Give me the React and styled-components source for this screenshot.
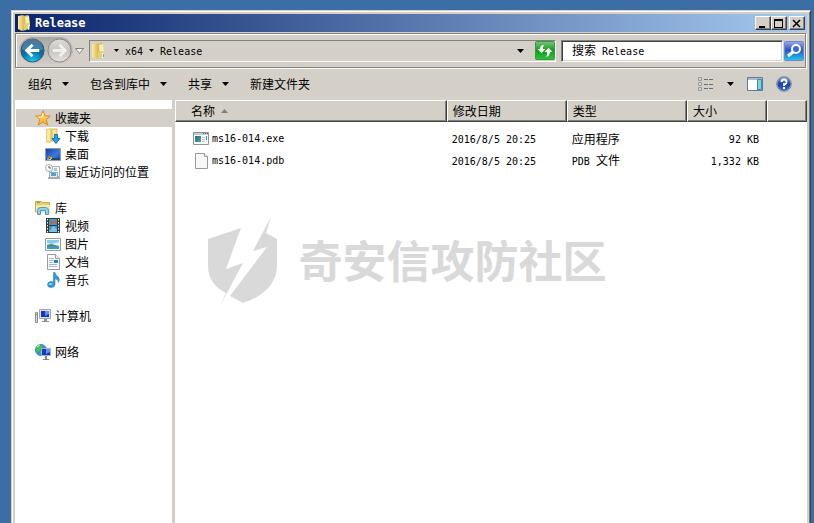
import React from 'react';
import styled, { createGlobalStyle } from 'styled-components';

const face = '#d4d0c8';
const shadow = '#808080';
const dark = '#404040';

const GlobalStyle = createGlobalStyle`
  * {
    box-sizing: border-box;
  }
  body {
    margin: 0;
    background: #3a6ea5;
    color: #000;
    font: 12px/18px "Noto Sans CJK SC", sans-serif;
  }
  #root {
    position: relative;
    min-height: 100vh;
    overflow: hidden;
  }
  button, input {
    margin: 0;
    padding: 0;
    border: 0;
    background: none;
    color: inherit;
    font: inherit;
  }
  a {
    color: inherit;
    text-decoration: none;
  }
  svg {
    display: block;
    flex: none;
  }
`;

const Window = styled.main`
  display: flex;
  flex-direction: column;
  min-height: calc(100vh - 10px);
  margin: 10px 3px 0 11px;
  padding: 3px 3px 0;
  border: 1px solid ${face};
  border-right-color: ${dark};
  border-bottom: 0;
  background: ${face};
  box-shadow: inset 1px 1px #fff, inset -1px 0 ${shadow};
`;

const TitleBar = styled.header`
  display: flex;
  align-items: center;
  height: 18px;
  padding: 0 2px;
  background: linear-gradient(90deg, #0a246a, #a6caf0);
`;

const Title = styled.h1`
  flex: 1;
  margin: 0 0 0 2px;
  color: #fff;
  font: bold 12px/18px "DejaVu Sans Mono", monospace;
`;

const CaptionButton = styled.button`
  display: flex;
  align-items: center;
  justify-content: center;
  width: 16px;
  height: 14px;
  margin-left: ${(props) => (props.$apart ? '2px' : 0)};
  border: 1px solid #fff;
  border-right-color: ${dark};
  border-bottom-color: ${dark};
  background: ${face};
  box-shadow: inset -1px -1px ${shadow};
`;

const NavBar = styled.div`
  display: flex;
  align-items: center;
  height: 35px;
  margin: 1px 1px 1px 0;
  padding: 0 1px 0 3px;
  border: 1px solid ${shadow};
  box-shadow: 1px 1px #fff, inset 1px 1px #fff;
`;

const Travel = styled.div`
  display: flex;
  align-items: center;
  gap: 2px;
  height: 27px;
  margin-right: 2px;
  padding: 0 1px;
  border-radius: 14px;
  background: linear-gradient(#aaa8a2, #d0ccc5);
`;

const IconButton = styled.button`
  display: flex;
  align-items: center;
  justify-content: center;
`;

const AddressBar = styled.div`
  display: flex;
  flex: 1;
  align-items: center;
  height: 22px;
  margin: 0 5px;
  padding-left: 1px;
  border: 1px solid ${shadow};
  border-right-color: #fff;
  border-bottom-color: #fff;
`;

const Crumbs = styled.nav`
  display: flex;
  flex: 1;
  align-items: center;
  gap: 6px;
  margin-left: 7px;
`;

const Locate = styled.div`
  display: flex;
  align-items: center;
  gap: 11px;
`;

const Search = styled.form`
  display: flex;
  align-items: center;
  gap: 1px;
`;

const SearchField = styled.div`
  display: flex;
  align-items: center;
  width: 222px;
  height: 22px;
  padding-left: 10px;
  border: 1px solid ${shadow};
  border-right-color: #fff;
  border-bottom-color: #fff;
  background: #fff;
  box-shadow: inset 1px 1px ${dark}, inset -1px -1px ${face};

  input {
    flex: 1;
    min-width: 0;
    outline: 0;
  }
`;

const Ascii = styled.span`
  font: 10px/18px "DejaVu Sans Mono", monospace;
  white-space: pre;
`;

const Toolbar = styled.div`
  display: flex;
  align-items: center;
  height: 31px;
  padding: 0 15px 2px 13px;
`;

const Command = styled.button`
  display: flex;
  align-items: center;
  gap: 10px;
  margin-right: 21px;
`;

const ToolbarEnd = styled.div`
  display: flex;
  align-items: center;
  gap: 13px;
  margin-left: auto;
`;

const Panes = styled.div`
  display: flex;
  flex: 1;
`;

const Sidebar = styled.nav`
  flex: none;
  width: 157px;
  padding: 9px 0 0 1px;
  background: #fff;
`;

const Group = styled.ul`
  margin: 0 0 18px;
  padding: 0;
  list-style: none;
`;

const Place = styled.a`
  display: flex;
  align-items: center;
  gap: 4px;
  height: 18px;
  padding-left: ${(props) => (props.$nested ? '29px' : '19px')};
  background: ${(props) => (props.$active ? face : 'none')};
`;

const Content = styled.section`
  flex: 1;
  margin-left: 3px;
  background: #fff;
`;

const Files = styled.table`
  width: 100%;
  border-collapse: separate;
  border-spacing: 0;
  table-layout: fixed;

  th, td {
    padding: 0 8px 0 5px;
    font-weight: normal;
    text-align: left;
    white-space: nowrap;
  }
  th {
    height: 22px;
    border: 1px solid #fff;
    border-right-color: ${dark};
    border-bottom-color: ${dark};
    background: ${face};
    box-shadow: inset -1px -1px ${shadow};
  }
  th:first-child {
    padding-left: 15px;
  }
  td {
    height: 22px;
  }
  td:first-child {
    padding-left: 18px;
  }
  td:nth-child(4) {
    text-align: right;
  }
  tbody::before {
    content: "";
    display: table-row;
    height: 6px;
  }
`;

const Col = styled.col`
  width: ${(props) => props.$width};
`;

const Cell = styled.span`
  display: flex;
  align-items: center;
  gap: ${(props) => props.$gap || '3px'};
`;

const Watermark = styled.div`
  position: absolute;
  inset: 0;
  display: flex;
  align-items: center;
  justify-content: center;
  gap: 20px;
  color: #d9d9d9;
  font: bold 44px/60px "Noto Sans CJK SC", sans-serif;
  pointer-events: none;

  span {
    padding-bottom: 6px;
  }
`;

const Caret = ({ size = 7, color = '#000', up }) => (
  <svg width={size} height={(size + 1) / 2} viewBox="0 0 8 4" preserveAspectRatio="none">
    <path d={up ? 'M0 4h8L4 0z' : 'M0 0h8L4 4z'} fill={color} />
  </svg>
);

const Icon = ({ size = 16, children }) => (
  <svg width={size} height={size} viewBox="0 0 16 16" aria-hidden="true">{children}</svg>
);

const Folder = () => (
  <Icon>
    <defs>
      <linearGradient id="folder">
        <stop offset="0" stopColor="#f8eeaa" />
        <stop offset="1" stopColor="#dcb94e" />
      </linearGradient>
    </defs>
    <path d="M6 1l5-1 1 1v11l-5 2z" fill="#d8b955" />
    <path d="M8 2l4-1 1 9-4 4z" fill="#f9efb5" />
    <path d="M1 1l5-1 1 1v13l-2 2-4-2z" fill="url(#folder)" />
    <path d="M7 9l4-1 2 1v4l-4 2-4 1 2-2z" fill="#e6cd73" />
    <path d="M11 10h2v4l-2 1z" fill="#f8f3d0" />
    <path d="M12 11h1v3h-1z" fill="#48a7d8" />
  </Icon>
);

const Star = () => (
  <Icon>
    <defs>
      <linearGradient id="star" x2="0" y2="1">
        <stop offset="0" stopColor="#ffe8a0" />
        <stop offset="1" stopColor="#ffab13" />
      </linearGradient>
    </defs>
    <path d="M8 .8l2 5 5.3.2-4.1 3.5 1.6 5.5L8 12l-4.8 3 1.6-5.5L.7 6 6 5.8z" fill="url(#star)" stroke="#e5871d" strokeLinejoin="round" />
    <path d="M8 3l-1 4-4 .4" fill="none" stroke="#fff6c5" />
  </Icon>
);

const Downloads = () => (
  <Icon>
    <path d="M1 1l5-1 1 1v12l-2 2-4-1z" fill="#e9cd67" />
    <path d="M7 1h5v12H7z" fill="#f4e49e" stroke="#d9bb5c" />
    <path d="M2 2l3-1v12H2z" fill="#f8eaa4" />
    <path d="M9.5 6.5h3v4H15L11 15.5l-4-5h2.5z" fill="#2ba0e6" stroke="#1671b6" />
  </Icon>
);

const Desktop = () => (
  <Icon>
    <defs>
      <linearGradient id="desk" y2="1">
        <stop offset="0" stopColor="#123f9c" />
        <stop offset=".6" stopColor="#3e7bdc" />
        <stop offset="1" stopColor="#163d8f" />
      </linearGradient>
    </defs>
    <path d="M.5 2.5h15v12H.5z" fill="url(#desk)" stroke="#8a9fb8" />
    <path d="M1 12h14v2H1z" fill="#26466f" />
    <path d="M3 10h2v2H3z" fill="#f15a2a" />
    <path d="M5 11h2v2H5z" fill="#8bd42e" />
    <path d="M2 12h2v2H2z" fill="#48b5ff" />
    <path d="M4 13h2v1H4z" fill="#ffd22e" />
  </Icon>
);

const Recent = () => (
  <Icon>
    <path d="M6.5 2.5h8v10h-8z" fill="#f4f7f9" stroke="#a8b0b6" />
    <path d="M4.5 8.5h8v6h-8z" fill="#e9eef2" stroke="#9aa3aa" />
    <path d="M9 4h3v3H9z" fill="#9acbe8" />
    <path d="M6 9h5v3H6z" fill="#4aa7d4" />
    <path d="M3 13h12v2H3z" fill="#a3abaf" />
    <circle cx="4" cy="4" r="3.5" fill="#fff" stroke="#a2a9af" />
    <path d="M4 2v2h2" fill="none" stroke="#55616b" />
  </Icon>
);

const Library = () => (
  <Icon>
    <path d="M.5 3V1.500h6l1 1h7V12H.5z" fill="#e8cc70" stroke="#c9a84a" />
    <path d="M1 5h14v8H1z" fill="#f7e8a2" />
    <path d="M2 2h3v1H2z" fill="#47bf35" />
    <path d="M2.5 14.5v-4q0-3 3-3h5q3 0 3 3v4h-3v-4h-5v4z" fill="#8bd0ef" stroke="#4b9ac2" />
  </Icon>
);

const Video = () => (
  <Icon>
    <path d="M1 0h14v15H1z" fill="#303a3d" />
    <path d="M4 1h8v6H4zM4 8h8v6H4z" fill="#3d9bd8" />
    <path d="M4 1l4 3 4-2v4l-3-1-3 2z" fill="#b5634a" />
    <path d="M4 14l2-4 3-2 3 4v2z" fill="#70c6f2" />
    <path d="M4 9l3 1-2 2z" fill="#b5634a" />
    <path d="M2.5 1v14M13.5 1v14" stroke="#eef2f2" strokeDasharray="1.5 1.5" />
  </Icon>
);

const Pictures = () => (
  <Icon>
    <path d="M.5 2.5h15v12H.5z" fill="#fff" stroke="#969ba0" />
    <path d="M2 4h12v9H2z" fill="#88caf0" />
    <path d="M2 7l5 1 7-2v4H2z" fill="#e9f4f5" />
    <path d="M2 9l4-1 8 2v1H2z" fill="#438c61" />
    <path d="M2 10h12v3H2z" fill="#3b9ac3" />
  </Icon>
);

const Documents = () => (
  <Icon>
    <path d="M2.5.5h8l4 4v11h-12z" fill="#fff" stroke="#979da5" />
    <path d="M10.5.5v4h4" fill="#e9edf1" stroke="#979da5" />
    <path d="M4 4.5h5M4 6.5h5M4 8.5h4M4 10.5h8M4 12.5h8" stroke="#a6b3cc" />
    <path d="M9 6h4v3H9z" fill="#267dc1" />
  </Icon>
);

const Music = () => (
  <Icon>
    <path
      d="M8.500.5h1.500q.5 2.500 2.500 3.800 3 2.500 1 6.200.2-3-3.500-4v6q-.5 3-4 3-3.500-.2-3.500-2.700 0-3 3.500-3.200 1.500 0 2.500.6z"
      fill="#2c9be3"
      stroke="#176cb1"
      strokeWidth=".5"
    />
    <ellipse cx="5.5" cy="12" rx="2" ry="1" fill="#91d8fb" />
  </Icon>
);

const Computer = () => (
  <Icon>
    <path d="M4.5 1.5h11v9h-11z" fill="#dee1e3" stroke="#a0a5aa" />
    <path d="M6 3h8v6H6z" fill="#1634c2" />
    <path d="M10 3h4v3l-4 2z" fill="#5f91ef" />
    <path d="M9 11h3v2h2v1H7v-1h2z" fill="#8b9196" />
    <path d="M.5 4.5h2v10h-2z" fill="#d1d4d6" stroke="#8b9195" />
    <path d="M1 6h1v1H1z" fill="#43c62e" />
  </Icon>
);

const Network = () => (
  <Icon>
    <circle cx="6" cy="6" r="5.5" fill="#2496d9" stroke="#4289b5" />
    <path d="M2 2l4-1 2 2-3 2-1 3-3-1zM5 7l3 2-2 2z" fill="#4bc33b" />
    <path d="M2 3l3-2" stroke="#d0f7d0" />
    <path d="M6.5 4.5h9v7h-9z" fill="#1538c5" stroke="#a4b6ca" />
    <path d="M11 5h4v3l-4 2z" fill="#638fe8" />
    <path d="M10 12h2v3h2v1H8v-1h2z" fill="#798694" />
  </Icon>
);

const Program = () => (
  <Icon>
    <defs>
      <linearGradient id="app" x2="1" y2="1">
        <stop offset="0" stopColor="#2764a5" />
        <stop offset="1" stopColor="#4aac6c" />
      </linearGradient>
    </defs>
    <path d="M.5 1.5h15v12H.5z" fill="#fff" stroke="#8b949b" />
    <path d="M1 2h14v2H1z" fill="#c3ccd3" />
    <path d="M10 2.5h1M12 2.5h1M14 2.5h1" stroke="#53606b" />
    <path d="M2 5h6v6H2z" fill="url(#app)" />
    <path d="M9 6.5h3M9 8.5h3M9 10.5h3" stroke="#b4c0c9" />
    <path d="M13 5h1v4h-1z" fill="#4387b9" />
  </Icon>
);

const Blank = () => (
  <Icon>
    <path d="M2.5.5h9l3 3v12h-12z" fill="#f8f8f8" stroke="#999" />
    <path d="M11.5.5v3h3" fill="#fff" stroke="#999" />
  </Icon>
);

const Arrow = ({ forward }) => (
  <svg width="25" height="25" viewBox="0 0 26 26" aria-hidden="true">
    <defs>
      <radialGradient id="back" cy="1" r=".9">
        <stop offset="0" stopColor="#1bd0f5" />
        <stop offset=".55" stopColor="#0871ad" />
        <stop offset="1" stopColor="#1d5684" />
      </radialGradient>
      <linearGradient id="forward" x2="0" y2="1">
        <stop offset="0" stopColor="#deddda" />
        <stop offset=".5" stopColor="#c7c5c0" />
        <stop offset="1" stopColor="#e4e2dd" />
      </linearGradient>
    </defs>
    <circle cx="13" cy="13" r="12" fill={forward ? 'url(#forward)' : 'url(#back)'} stroke={forward ? '#858585' : '#38566f'} />
    {!forward && <path d="M2 12a11 11 0 0 1 22 0q-11 3-22 0z" fill="#fff" opacity=".2" />}
    <path
      d={forward ? 'M6 13h13M13 7l6 6-6 6' : 'M20 13H7M13 7l-6 6 6 6'}
      fill="none"
      stroke={forward ? '#f1f0ed' : '#fff'}
      strokeWidth="3"
    />
  </svg>
);

const Refresh = () => (
  <svg width="20" height="19" viewBox="0 0 20 19" aria-hidden="true">
    <defs>
      <linearGradient id="refresh" x2="0" y2="1">
        <stop offset="0" stopColor="#77c778" />
        <stop offset=".5" stopColor="#12991d" />
        <stop offset="1" stopColor="#32c43b" />
      </linearGradient>
    </defs>
    <rect x=".5" y=".5" width="19" height="18" rx="1" fill="url(#refresh)" stroke="#39964b" />
    <path d="M9 4q-4 0-4 4H2.500l4 4 4-4H8q-.5-2 1-4zM11 16q4-1 4-5h2.500l-4-4-4 4H12q.5 3-1 5z" fill="#fff" />
  </svg>
);

const Magnifier = () => (
  <svg width="20" height="20" viewBox="0 0 20 20" aria-hidden="true">
    <defs>
      <linearGradient id="find" x2="0" y2="1">
        <stop offset="0" stopColor="#9caaf2" />
        <stop offset=".45" stopColor="#2854c8" />
        <stop offset="1" stopColor="#20c7f4" />
      </linearGradient>
    </defs>
    <rect x=".5" y=".5" width="19" height="19" rx="1" fill="url(#find)" stroke="#718ac6" />
    <path d="M9 11l-5 4" stroke="#fff" strokeWidth="3" />
    <circle cx="12" cy="8" r="4" fill="#3769d4" stroke="#fff" strokeWidth="2" />
  </svg>
);

const ViewList = () => (
  <Icon>
    <path d="M.5 1.5h3v3h-3zM.5 6.500h3v3h-3zM.5 11.5h3v3h-3z" fill="#fff" stroke="#929ba3" />
    <path d="M1.500 3h1M1.500 13h1" stroke="#39556f" />
    <path d="M1.500 8h1" stroke="#e03c1e" />
    <path d="M6 3.5h4M11 3.5h4M6 8.5h4M11 8.5h4M6 12.5h4M11 12.5h4" stroke="#5f6f80" />
  </Icon>
);

const PreviewPane = () => (
  <Icon>
    <path d="M.5 1.5h15v13H.5z" fill="#fff" stroke="#557e9f" />
    <path d="M1 2h14v2H1z" fill="#a9bdcd" />
    <path d="M10.5 3.5h4v10h-4z" fill="#79d5ec" stroke="#4287a5" />
  </Icon>
);

const Help = () => (
  <Icon>
    <defs>
      <linearGradient id="help" x2="0" y2="1">
        <stop offset="0" stopColor="#7da3e6" />
        <stop offset=".5" stopColor="#173eb0" />
        <stop offset="1" stopColor="#3e73da" />
      </linearGradient>
    </defs>
    <circle cx="8" cy="8" r="7.2" fill="url(#help)" stroke="#8794ad" strokeWidth="1.5" />
    <path d="M5.500 6q0-2.500 2.500-2.500T10.500 6 8 8v2" fill="none" stroke="#fff" strokeWidth="1.8" />
    <path d="M7 11h2v2H7z" fill="#fff" />
  </Icon>
);

const Shield = () => (
  <svg width="71" height="92" viewBox="0 0 71 92" aria-hidden="true">
    <path d="M0 23L33 12 18 53l17-6-23 43 6-13Q0 68 0 50z" fill="currentColor" />
    <path d="M63 1l-5 16 11 6v27q-1 26-34 37l-13-7 37-49-14 4z" fill="currentColor" />
  </svg>
);

const groups = [
  [
    { name: '收藏夹', icon: Star, active: true },
    { name: '下载', icon: Downloads },
    { name: '桌面', icon: Desktop },
    { name: '最近访问的位置', icon: Recent },
  ],
  [
    { name: '库', icon: Library },
    { name: '视频', icon: Video },
    { name: '图片', icon: Pictures },
    { name: '文档', icon: Documents },
    { name: '音乐', icon: Music },
  ],
  [{ name: '计算机', icon: Computer }],
  [{ name: '网络', icon: Network }],
];

const files = [
  { name: 'ms16-014.exe', icon: Program, type: '应用程序', size: '92 KB' },
  { name: 'ms16-014.pdb', icon: Blank, prefix: 'PDB ', type: '文件', size: '1,332 KB' },
];

const commands = [
  { name: '组织', menu: true },
  { name: '包含到库中', menu: true },
  { name: '共享', menu: true },
  { name: '新建文件夹' },
];

const App = () => {
  const [query, setQuery] = React.useState('');

  return (
    <>
      <GlobalStyle />
      <Window>
        <TitleBar>
          <Folder />
          <Title>Release</Title>
          <CaptionButton aria-label="最小化">
            <svg width="10" height="9"><path d="M1 7h6v2H1z" /></svg>
          </CaptionButton>
          <CaptionButton aria-label="最大化">
            <svg width="10" height="9"><path d="M0 0h9v9H0zM1 2v6h7V2z" fillRule="evenodd" /></svg>
          </CaptionButton>
          <CaptionButton aria-label="关闭" $apart>
            <svg width="10" height="9"><path d="M1 1l7 7M8 1L1 8" stroke="#000" strokeWidth="1.6" /></svg>
          </CaptionButton>
        </TitleBar>

        <NavBar>
          <Travel>
            <IconButton aria-label="后退"><Arrow /></IconButton>
            <IconButton aria-label="前进"><Arrow forward /></IconButton>
          </Travel>
          <IconButton aria-label="最近的页面">
            <svg width="9" height="6"><path d="M.5.5h8l-4 5z" fill="#fff" stroke="#808080" /></svg>
          </IconButton>
          <AddressBar>
            <Folder />
            <Crumbs aria-label="地址">
              <Caret size={5} />
              <a href="#x64"><Ascii>x64</Ascii></a>
              <Caret size={5} />
              <a href="#release"><Ascii>Release</Ascii></a>
            </Crumbs>
            <Locate>
              <IconButton aria-label="以前的位置"><Caret /></IconButton>
              <IconButton aria-label="刷新"><Refresh /></IconButton>
            </Locate>
          </AddressBar>
          <Search onSubmit={(e) => e.preventDefault()}>
            <SearchField>
              {query === '' ? <label htmlFor="search">搜索<Ascii> Release</Ascii></label> : null}
              <input id="search" value={query} onChange={(e) => setQuery(e.target.value)} />
            </SearchField>
            <IconButton aria-label="搜索"><Magnifier /></IconButton>
          </Search>
        </NavBar>

        <Toolbar>
          {commands.map(({ name, menu }) => (
            <Command key={name}>
              {name}
              {menu ? <Caret /> : null}
            </Command>
          ))}
          <ToolbarEnd>
            <IconButton aria-label="更改视图"><ViewList /></IconButton>
            <IconButton aria-label="更多选项"><Caret /></IconButton>
            <IconButton aria-label="预览窗格"><PreviewPane /></IconButton>
            <IconButton aria-label="帮助"><Help /></IconButton>
          </ToolbarEnd>
        </Toolbar>

        <Panes>
          <Sidebar>
            {groups.map((group) => (
              <Group key={group[0].name}>
                {group.map(({ name, icon: PlaceIcon, active }, i) => (
                  <li key={name}>
                    <Place href={`#${name}`} $nested={i > 0} $active={active}>
                      <PlaceIcon />
                      {name}
                    </Place>
                  </li>
                ))}
              </Group>
            ))}
          </Sidebar>
          <Content>
            <Files>
              <colgroup>
                <Col $width="43%" />
                <Col $width="19%" />
                <Col $width="19%" />
                <Col $width="80px" />
                <Col $width="40px" />
              </colgroup>
              <thead>
                <tr>
                  <th><Cell $gap="6px">名称 <Caret color="#808080" up /></Cell></th>
                  <th>修改日期</th>
                  <th>类型</th>
                  <th>大小</th>
                  <th aria-label="其他" />
                </tr>
              </thead>
              <tbody>
                {files.map(({ name, icon: FileIcon, prefix, type, size }) => (
                  <tr key={name}>
                    <td><Cell><FileIcon /><Ascii>{name}</Ascii></Cell></td>
                    <td><Ascii>2016/8/5 20:25</Ascii></td>
                    <td>{prefix ? <Ascii>{prefix}</Ascii> : null}{type}</td>
                    <td><Ascii>{size}</Ascii></td>
                    <td />
                  </tr>
                ))}
              </tbody>
            </Files>
          </Content>
        </Panes>
      </Window>
      <Watermark>
        <Shield />
        <span>奇安信攻防社区</span>
      </Watermark>
    </>
  );
};

export default App;
